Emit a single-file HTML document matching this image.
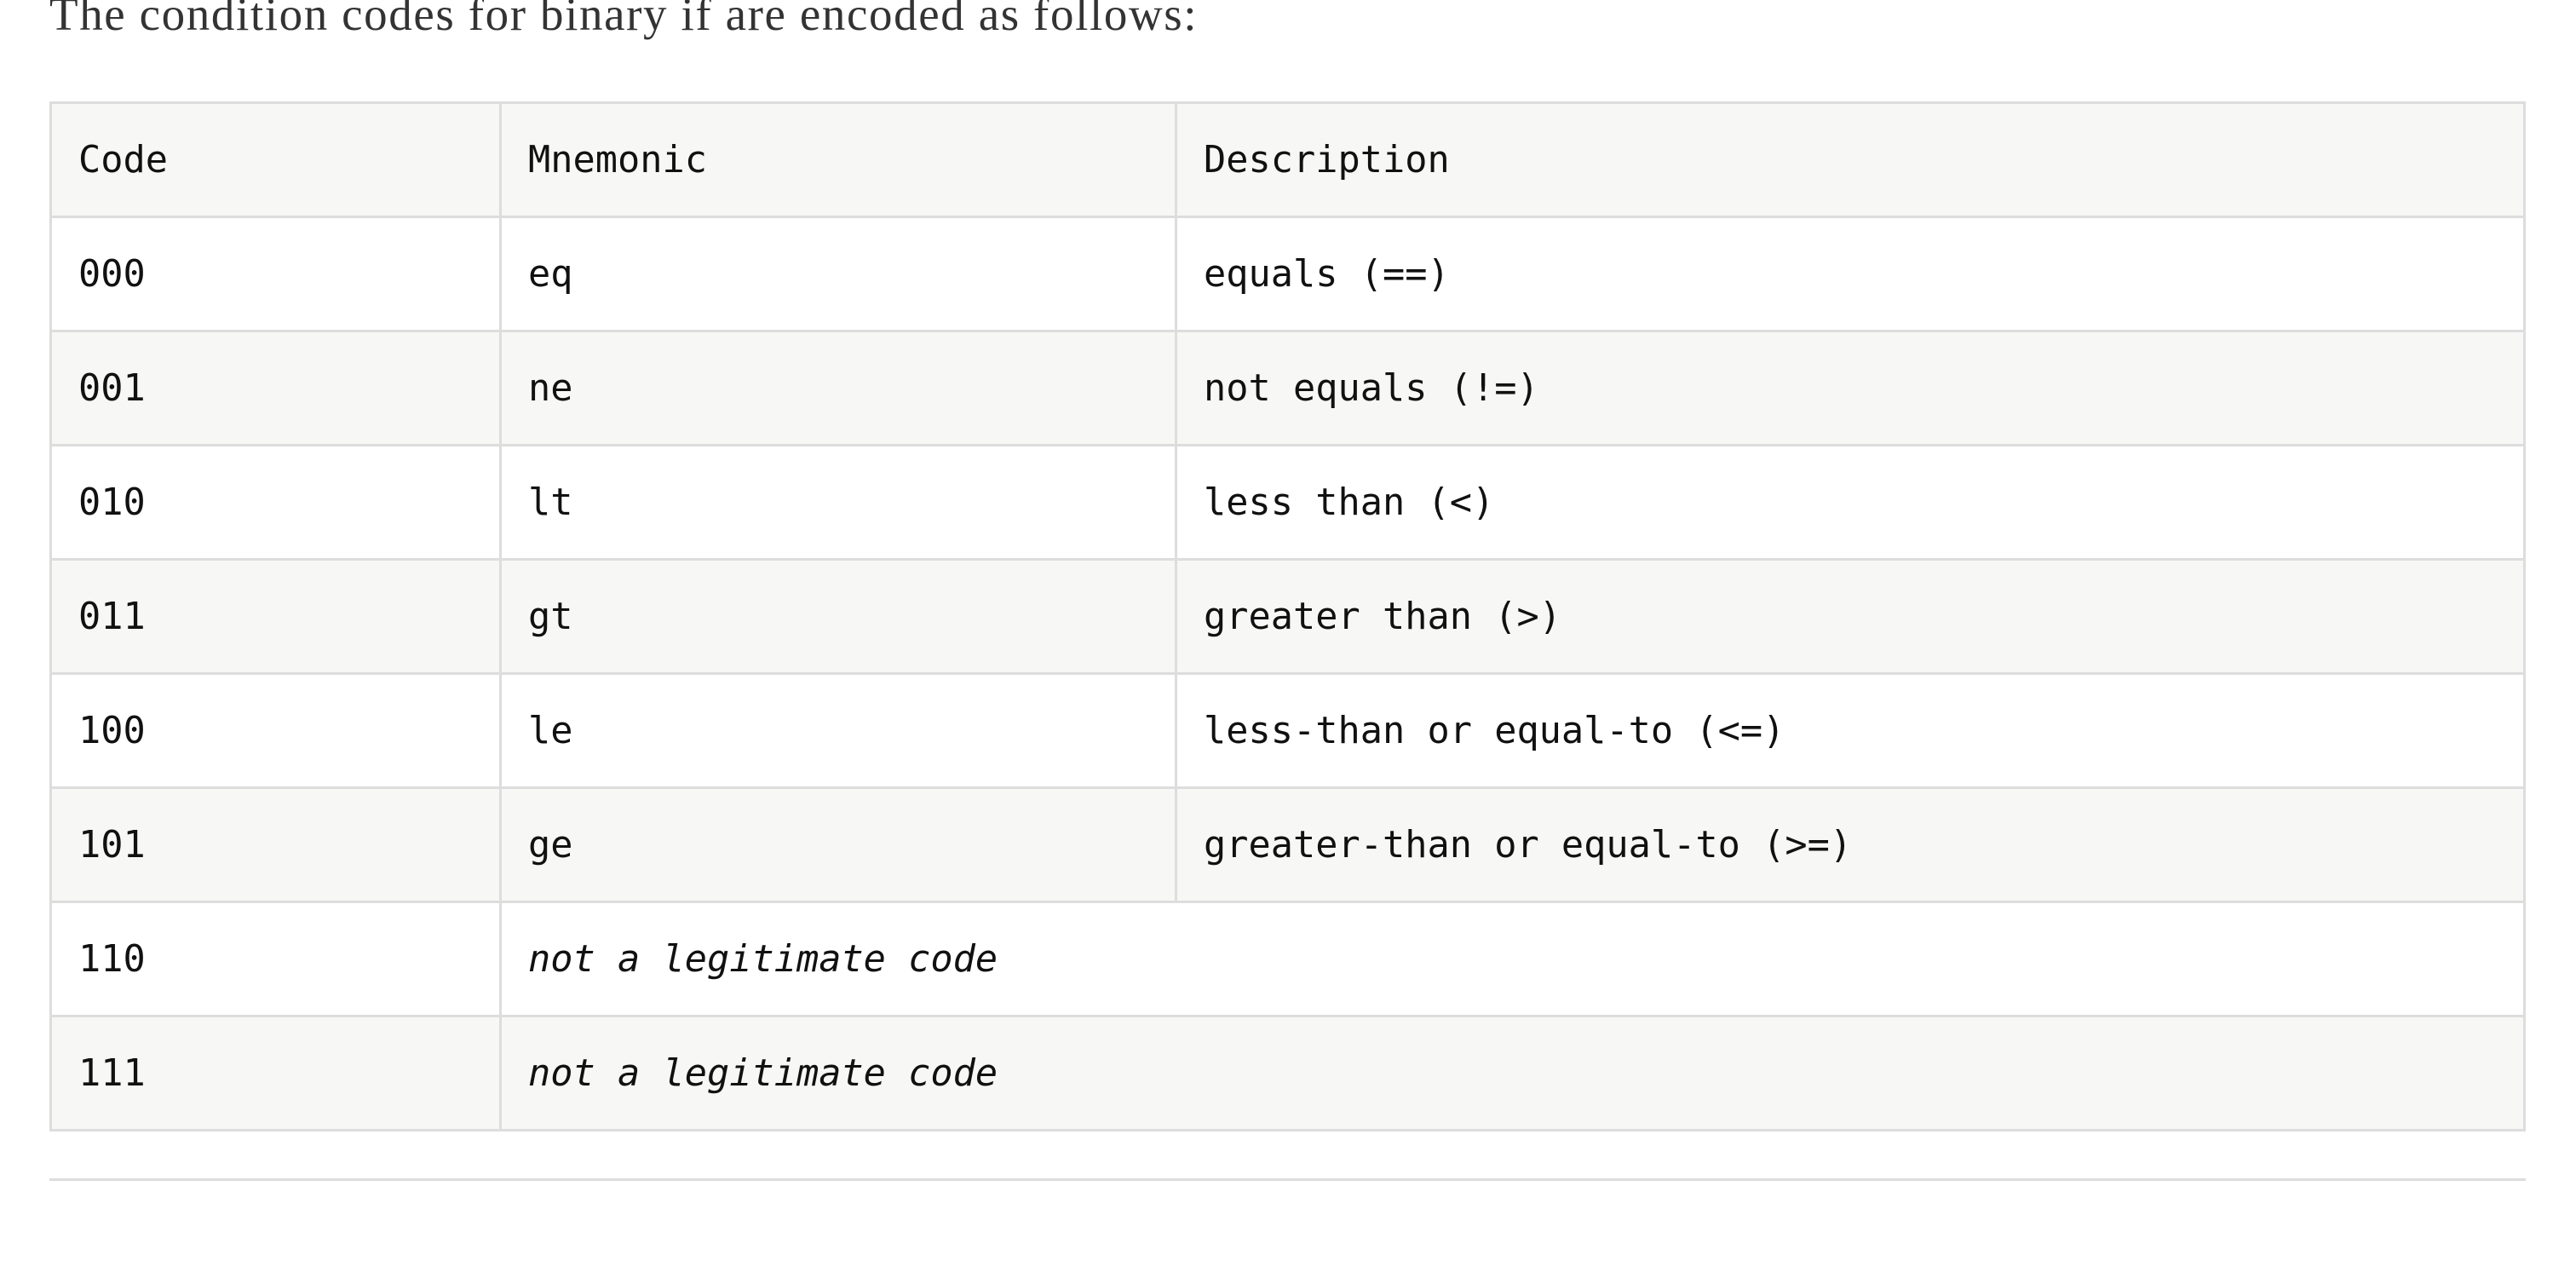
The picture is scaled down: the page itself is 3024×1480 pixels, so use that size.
<!DOCTYPE html>
<html><head><meta charset="utf-8"><style>
html,body{margin:0;padding:0;background:#fff;width:3024px;height:1480px;overflow:hidden}
p{position:absolute;left:58px;top:-15px;margin:0;font-family:"Liberation Serif","DejaVu Serif",serif;font-size:55px;letter-spacing:1.6px;color:#333;white-space:nowrap}
table{position:absolute;left:58px;top:119px;width:2907px;border-collapse:collapse;font-family:"DejaVu Sans Mono","Liberation Mono",monospace;font-size:43.6px;color:#111}
td{border:3px solid #ddd;height:134px;padding:0 0 0 31px;vertical-align:middle;box-sizing:border-box}
tr:nth-child(odd) td{background:#f7f7f6}
tr:nth-child(even) td{background:#fff}
td.a{width:528px}td.b{width:793px}
i{font-style:italic}
hr{position:absolute;left:58px;top:1383px;width:2907px;margin:0;border:0;border-top:3px solid #ddd}
</style></head><body>
<p>The condition codes for binary if are encoded as follows:</p>
<table>
<tr><td class="a">Code</td><td class="b">Mnemonic</td><td>Description</td></tr>
<tr><td>000</td><td>eq</td><td>equals (==)</td></tr>
<tr><td>001</td><td>ne</td><td>not equals (!=)</td></tr>
<tr><td>010</td><td>lt</td><td>less than (&lt;)</td></tr>
<tr><td>011</td><td>gt</td><td>greater than (&gt;)</td></tr>
<tr><td>100</td><td>le</td><td>less-than or equal-to (&lt;=)</td></tr>
<tr><td>101</td><td>ge</td><td>greater-than or equal-to (&gt;=)</td></tr>
<tr><td>110</td><td colspan="2"><i>not a legitimate code</i></td></tr>
<tr><td>111</td><td colspan="2"><i>not a legitimate code</i></td></tr>
</table>
<hr>
</body></html>
